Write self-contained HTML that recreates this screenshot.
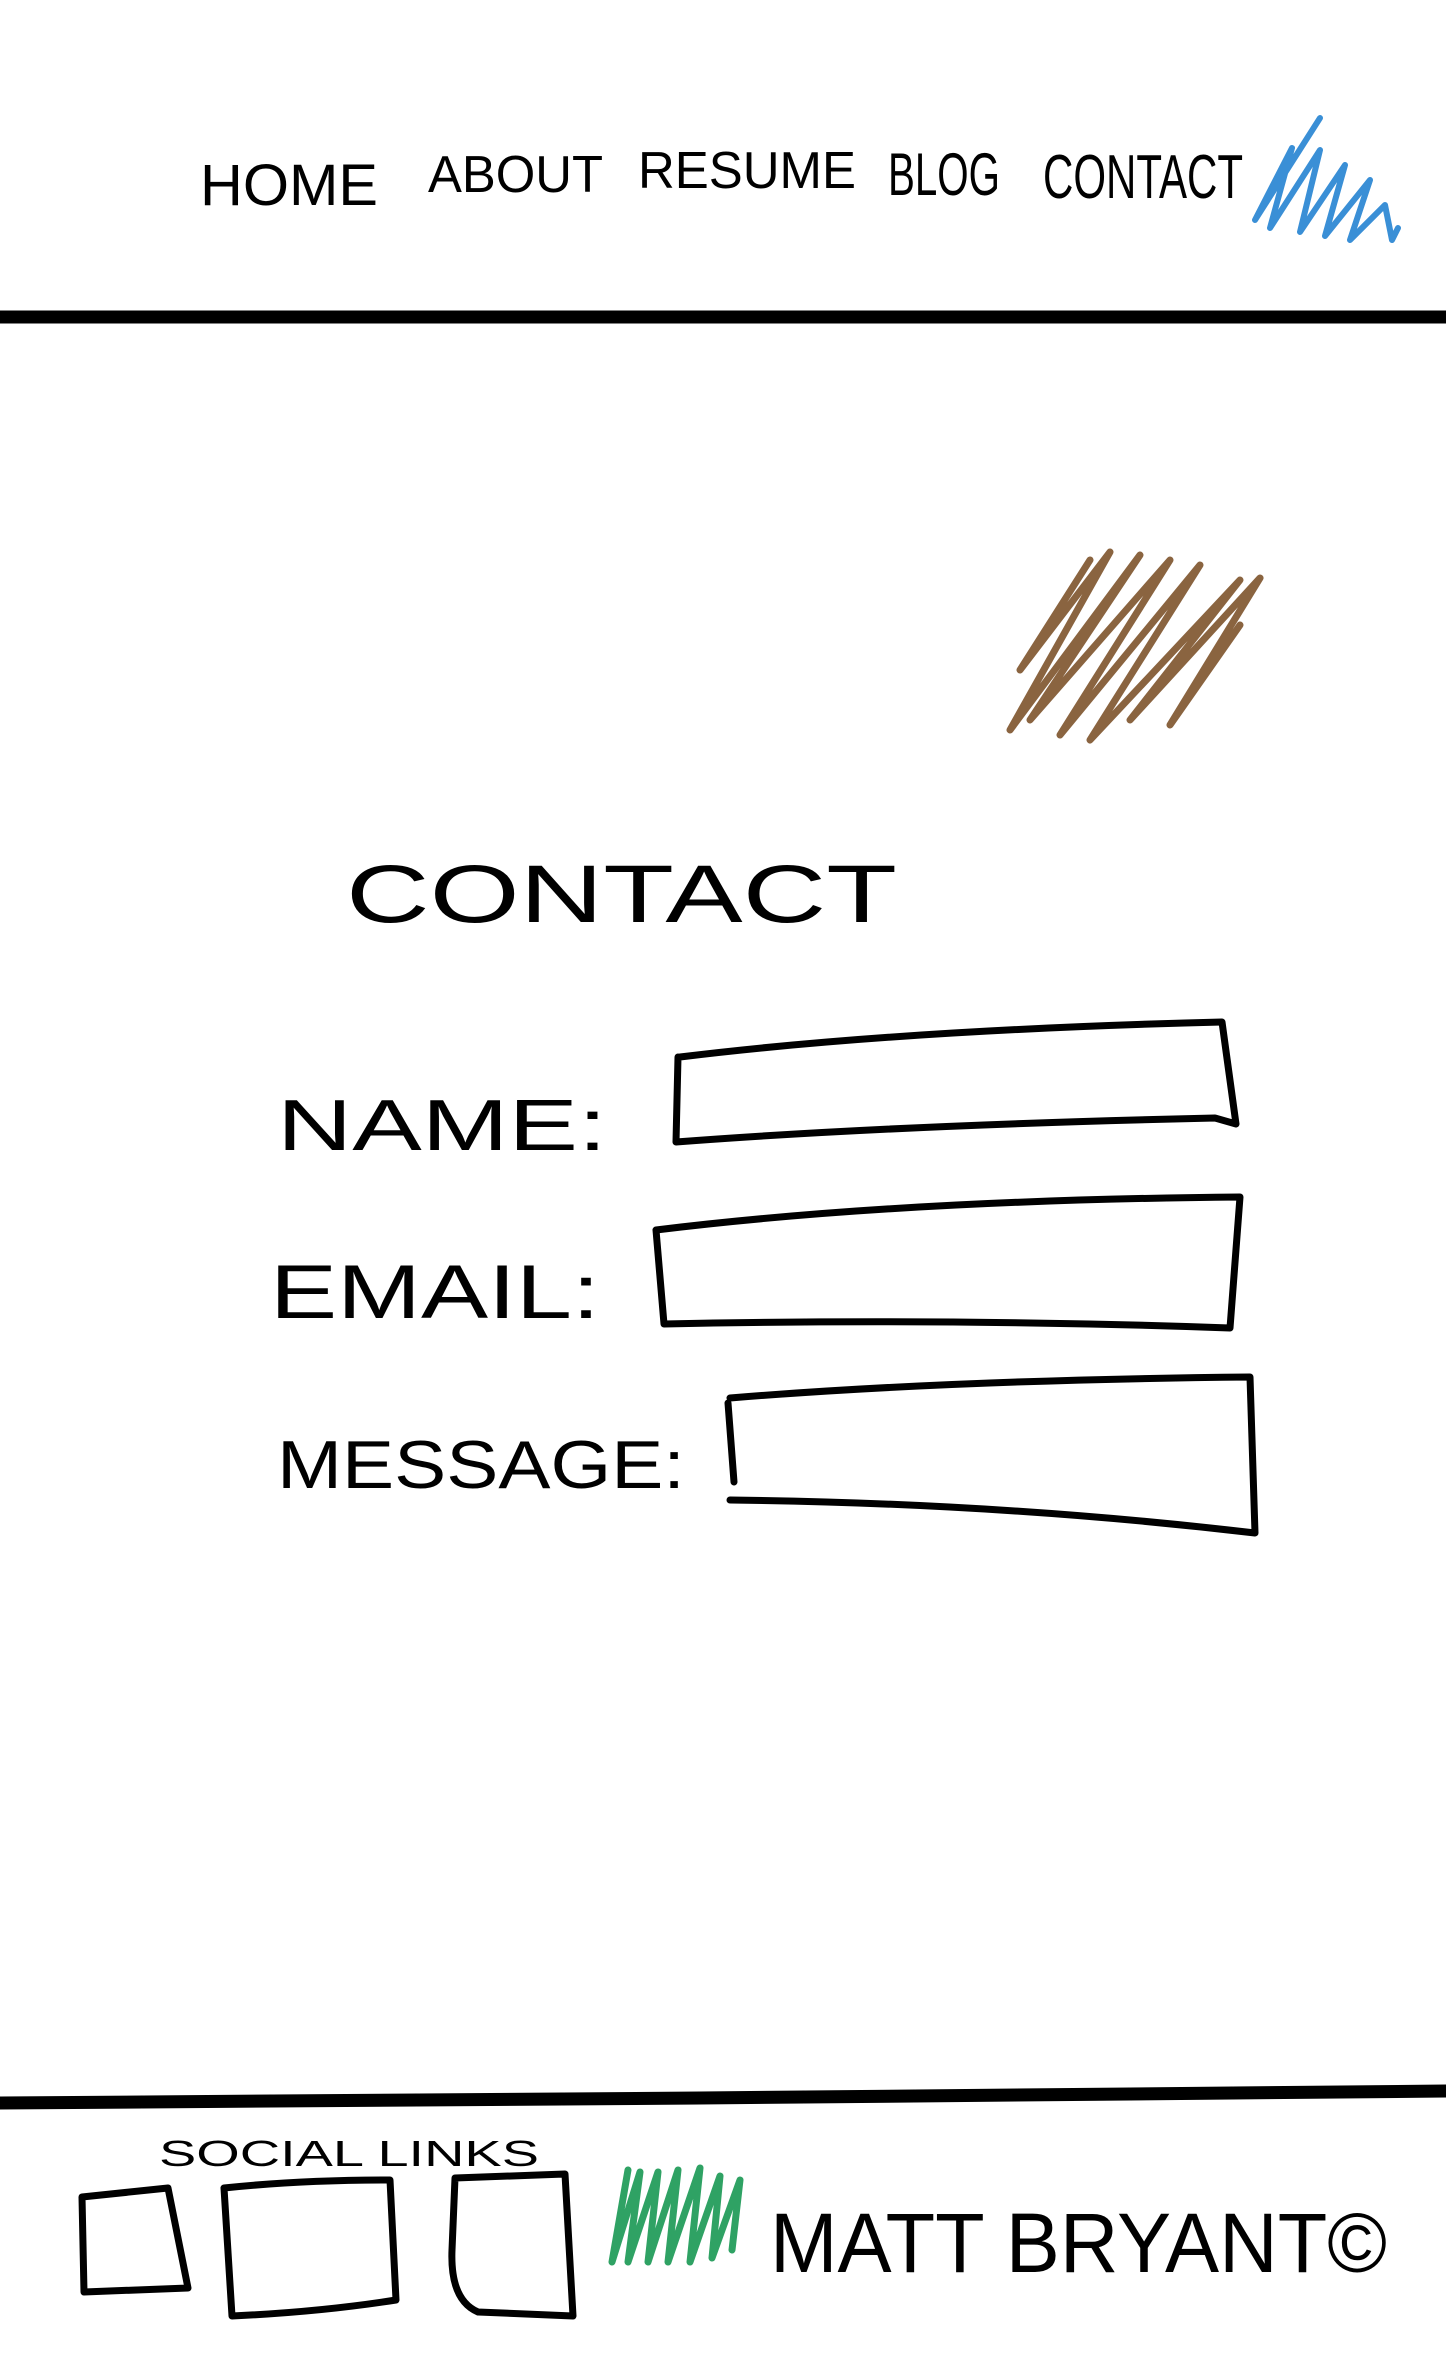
<!DOCTYPE html>
<html><head><meta charset="utf-8"><style>
html,body{margin:0;padding:0;background:#fff;width:1446px;height:2376px;overflow:hidden}
svg{display:block}
text{font-family:"Liberation Sans",sans-serif;fill:#000}
</style></head><body>
<svg width="1446" height="2376" viewBox="0 0 1446 2376" xmlns="http://www.w3.org/2000/svg">
<g stroke="#000" fill="none" stroke-linecap="round" stroke-linejoin="round">
<path d="M0 317 L1446 317" stroke-width="13"/>
<path d="M0 2103 L700 2098 L1446 2091" stroke-width="13"/>
<path d="M680 1057 Q900 1030 1222 1022 L1236 1124 L1215 1118 Q900 1125 676 1142 L678 1057" stroke-width="7"/>
<path d="M656 1230 Q900 1200 1240 1197 L1230 1328 Q950 1318 664 1324 L656 1230" stroke-width="7"/>
<path d="M730 1398 Q950 1380 1250 1377 L1255 1533 Q1000 1503 730 1500" stroke-width="7"/>
<path d="M728 1403 L734 1482" stroke-width="7"/>
<path d="M82 2197 L168 2188 L188 2288 L84 2292 Z" stroke-width="7"/>
<path d="M224 2188 Q300 2180 390 2180 L396 2300 Q320 2312 232 2316 L224 2188" stroke-width="7"/>
<path d="M455 2178 L565 2174 L573 2316 L478 2312 Q450 2300 452 2250 Z" stroke-width="7"/>
</g>
<path d="M1320 118 L1255 220 L1292 148 L1270 228 L1320 150 L1300 232 L1345 165 L1325 236 L1370 180 L1350 240 L1385 205 L1392 240 L1398 228" stroke="#3a8fd6" stroke-width="6" fill="none" stroke-linecap="round" stroke-linejoin="round"/>
<path d="M1090 560 L1020 670 L1110 552 L1010 730 L1140 555 L1030 720 L1170 560 L1060 735 L1200 565 L1090 740 L1240 580 L1130 720 L1260 578 L1170 725 L1240 625" stroke="#8a6440" stroke-width="7" fill="none" stroke-linecap="round" stroke-linejoin="round"/>
<path d="M628 2170 L612 2262 L640 2172 L628 2262 L658 2172 L648 2262 L678 2170 L668 2262 L700 2168 L690 2262 L720 2176 L712 2258 L740 2180 L732 2250" stroke="#2fa264" stroke-width="7" fill="none" stroke-linecap="round" stroke-linejoin="round"/>
<text x="200" y="205" font-size="58" textLength="178" lengthAdjust="spacingAndGlyphs">HOME</text>
<text x="428" y="192" font-size="52" textLength="175" lengthAdjust="spacingAndGlyphs">ABOUT</text>
<text x="638" y="188" font-size="52" textLength="218" lengthAdjust="spacingAndGlyphs">RESUME</text>
<text x="888" y="195" font-size="60" textLength="112" lengthAdjust="spacingAndGlyphs">BLOG</text>
<text x="1043" y="198" font-size="62" textLength="200" lengthAdjust="spacingAndGlyphs">CONTACT</text>
<text x="346" y="922" font-size="82" textLength="551" lengthAdjust="spacingAndGlyphs">CONTACT</text>
<text x="277" y="1150" font-size="72" textLength="330" lengthAdjust="spacingAndGlyphs">NAME:</text>
<text x="270" y="1318" font-size="76" textLength="330" lengthAdjust="spacingAndGlyphs">EMAIL:</text>
<text x="277" y="1488" font-size="68" textLength="408" lengthAdjust="spacingAndGlyphs">MESSAGE:</text>
<text x="159" y="2166" font-size="36" textLength="380" lengthAdjust="spacingAndGlyphs">SOCIAL LINKS</text>
<text x="770" y="2272" font-size="84" textLength="617" lengthAdjust="spacingAndGlyphs">MATT BRYANT©</text>
</svg>
</body></html>
